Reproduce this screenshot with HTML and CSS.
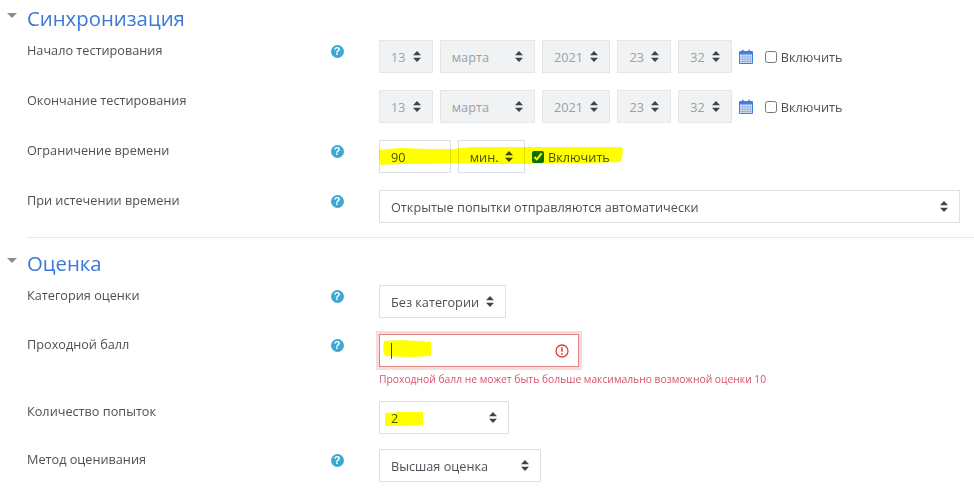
FILE: index.html
```html
<!DOCTYPE html>
<html lang="ru">
<head>
<meta charset="utf-8">
<title>Настройки теста</title>
<link rel="stylesheet" href="styles.css">
</head>
<body>
<main class="page">
  <section class="section first">
    <h2 class="head"><span class="caret"></span>Синхронизация</h2>
    <div class="rows timing">
      <div class="row">
        <label class="label">Начало тестирования</label>
        <span class="help">?</span>
        <div class="controls">
          <div class="sel off w-day"><span>13</span><svg class="arr" viewBox="0 0 8 11"><path d="M4 0 8 4.2H0zM4 11 0 6.8H8z"/></svg></div>
          <div class="sel off w-mon"><span>марта</span><svg class="arr" viewBox="0 0 8 11"><path d="M4 0 8 4.2H0zM4 11 0 6.8H8z"/></svg></div>
          <div class="sel off w-yr"><span>2021</span><svg class="arr" viewBox="0 0 8 11"><path d="M4 0 8 4.2H0zM4 11 0 6.8H8z"/></svg></div>
          <div class="sel off w-day"><span>23</span><svg class="arr" viewBox="0 0 8 11"><path d="M4 0 8 4.2H0zM4 11 0 6.8H8z"/></svg></div>
          <div class="sel off w-day"><span>32</span><svg class="arr" viewBox="0 0 8 11"><path d="M4 0 8 4.2H0zM4 11 0 6.8H8z"/></svg></div>
          <svg class="cal" viewBox="0 0 14 15"><path fill="#3f7fe0" d="M1 2h2V.8h1.6V2h4.8V.8H11V2h2a1 1 0 0 1 1 1v11a1 1 0 0 1-1 1H1a1 1 0 0 1-1-1V3a1 1 0 0 1 1-1z"/><path fill="#dbe6fa" d="M1 5.5h12V14H1z"/><path stroke="#7fa6ea" stroke-width=".7" d="M1 8h12M1 10.3h12M1 12.5h12M3.7 5.5V14M6.2 5.5V14M8.8 5.5V14M11.3 5.5V14"/></svg>
          <label class="check cal-check"><input type="checkbox"><span>Включить</span></label>
        </div>
      </div>
      <div class="row">
        <label class="label">Окончание тестирования</label>
        <span></span>
        <div class="controls">
          <div class="sel off w-day"><span>13</span><svg class="arr" viewBox="0 0 8 11"><path d="M4 0 8 4.2H0zM4 11 0 6.8H8z"/></svg></div>
          <div class="sel off w-mon"><span>марта</span><svg class="arr" viewBox="0 0 8 11"><path d="M4 0 8 4.2H0zM4 11 0 6.8H8z"/></svg></div>
          <div class="sel off w-yr"><span>2021</span><svg class="arr" viewBox="0 0 8 11"><path d="M4 0 8 4.2H0zM4 11 0 6.8H8z"/></svg></div>
          <div class="sel off w-day"><span>23</span><svg class="arr" viewBox="0 0 8 11"><path d="M4 0 8 4.2H0zM4 11 0 6.8H8z"/></svg></div>
          <div class="sel off w-day"><span>32</span><svg class="arr" viewBox="0 0 8 11"><path d="M4 0 8 4.2H0zM4 11 0 6.8H8z"/></svg></div>
          <svg class="cal" viewBox="0 0 14 15"><path fill="#3f7fe0" d="M1 2h2V.8h1.6V2h4.8V.8H11V2h2a1 1 0 0 1 1 1v11a1 1 0 0 1-1 1H1a1 1 0 0 1-1-1V3a1 1 0 0 1 1-1z"/><path fill="#dbe6fa" d="M1 5.5h12V14H1z"/><path stroke="#7fa6ea" stroke-width=".7" d="M1 8h12M1 10.3h12M1 12.5h12M3.7 5.5V14M6.2 5.5V14M8.8 5.5V14M11.3 5.5V14"/></svg>
          <label class="check cal-check"><input type="checkbox"><span>Включить</span></label>
        </div>
      </div>
      <div class="row">
        <label class="label">Ограничение времени</label>
        <span class="help">?</span>
        <div class="controls">
          <div class="sel w-num"><span>90</span></div>
          <div class="sel w-unit"><span>мин.</span><svg class="arr" viewBox="0 0 8 11"><path d="M4 0 8 4.2H0zM4 11 0 6.8H8z"/></svg></div>
          <label class="check"><input type="checkbox" checked><span>Включить</span></label>
        </div>
      </div>
      <div class="row">
        <label class="label">При истечении времени</label>
        <span class="help">?</span>
        <div class="controls">
          <div class="sel w-full"><span>Открытые попытки отправляются автоматически</span><svg class="arr" viewBox="0 0 8 11"><path d="M4 0 8 4.2H0zM4 11 0 6.8H8z"/></svg></div>
        </div>
      </div>
    </div>
  </section>

  <section class="section second">
    <h2 class="head"><span class="caret"></span>Оценка</h2>
    <div class="row row-cat">
      <label class="label">Категория оценки</label>
      <span class="help">?</span>
      <div class="controls">
        <div class="sel w-cat"><span>Без категории</span><svg class="arr" viewBox="0 0 8 11"><path d="M4 0 8 4.2H0zM4 11 0 6.8H8z"/></svg></div>
      </div>
    </div>
    <div class="row row-err">
      <label class="label">Проходной балл</label>
      <span class="help">?</span>
      <div class="controls stack">
        <div class="sel err"><span class="cursor"></span><svg class="err-icon" viewBox="0 0 14 14"><circle cx="7" cy="7" r="6" fill="none" stroke="#d9413f" stroke-width="1.3"/><path stroke="#d9413f" stroke-width="1.5" d="M7 3.2v4.6M7 9.2v1.5"/></svg></div>
        <div class="feedback">Проходной балл не может быть больше максимально возможной оценки 10</div>
      </div>
    </div>
    <div class="row row-att">
      <label class="label">Количество попыток</label>
      <span></span>
      <div class="controls">
        <div class="sel w-att"><span>2</span><svg class="arr" viewBox="0 0 8 11"><path d="M4 0 8 4.2H0zM4 11 0 6.8H8z"/></svg></div>
      </div>
    </div>
    <div class="row row-met">
      <label class="label">Метод оценивания</label>
      <span class="help">?</span>
      <div class="controls">
        <div class="sel w-met"><span>Высшая оценка</span><svg class="arr" viewBox="0 0 8 11"><path d="M4 0 8 4.2H0zM4 11 0 6.8H8z"/></svg></div>
      </div>
    </div>
  </section>

  <svg class="marker" viewBox="0 0 974 496" aria-hidden="true">
    <path fill="#ffff00" d="M379 150 400 148 430 149 452 149 470 147 500 147 530 147 570 147 622 147 623 152 621 162 590 163 560 163 530 164 490 164 450 163 430 164 400 164 380 165z"/>
    <path fill="#ffff00" d="M384 341 400 340 420 341 431 342 431 356 410 357 385 356 383 350z"/>
    <path fill="#ffff00" d="M385 413 400 412 423 412 423 425 400 426 385 426z"/>
  </svg>
</main>
</body>
</html>
```

FILE: styles.css
```css
* { box-sizing: border-box; }

html, body { margin: 0; background: #fff; }

body {
  font-family: "Open Sans", "Noto Sans", sans-serif;
  font-size: 12.7px;
  color: #4c5158;
  overflow: hidden;
}

.page {
  position: relative;
  width: 974px;
  height: 496px;
  filter: blur(0.4px);
}

.section { display: flex; flex-direction: column; }
.first { height: 238px; border-bottom: 1px solid #e6e8ea; margin-left: 27px; }
.first .row, .first .head { margin-left: -27px; }
.second { padding-top: 12px; }

.head {
  display: flex;
  align-items: center;
  height: 26px;
  margin: 5px 0 9px;
  padding-left: 27px;
  position: relative;
  font-size: 20.35px;
  font-weight: 400;
  line-height: 26px;
  color: #3b78d8;
}
.second .head { margin: 0 0 9px; }

.caret {
  position: absolute;
  left: 7px;
  top: 8px;
  border-left: 5.5px solid transparent;
  border-right: 5.5px solid transparent;
  border-top: 5.5px solid #8a8d90;
}

.rows { display: flex; flex-direction: column; gap: 17.1px; }

.row {
  display: grid;
  grid-template-columns: 303.5px 48.5px 1fr;
  padding-left: 27px;
  align-items: start;
}

.label { line-height: 21px; }

.help {
  width: 13px;
  height: 13px;
  margin-top: 5px;
  border-radius: 50%;
  background: #3ea8d2;
  color: #fff;
  font-family: "Liberation Sans", sans-serif;
  font-size: 11px;
  font-weight: 700;
  line-height: 13px;
  text-align: center;
}

.controls { display: flex; align-items: flex-start; gap: 7.3px; }
.stack { flex-direction: column; gap: 0; }

.sel {
  display: flex;
  align-items: center;
  justify-content: space-between;
  height: 33px;
  padding: 0 11px 0 11px;
  border: 1px solid #dde1e6;
  background: #fff;
  color: #4c5158;
  flex: none;
}

.off { background: #f0f2f4; color: #9a9fa6; border-color: #e4e7ea; }

.arr { width: 8px; height: 11px; fill: #3f444a; flex: none; }

.w-day { width: 53.5px; }
.w-mon { width: 95px; }
.w-yr { width: 68px; }
.w-num { width: 71.5px; }
.w-unit { width: 67px; }
.w-full { width: 581px; }
.w-cat { width: 127px; }
.w-att { width: 130px; }
.w-met { width: 162px; }

.cal { width: 14px; height: 15px; margin: 9px 0 0 0; flex: none; }

.check {
  display: flex;
  align-items: center;
  height: 33px;
  font-size: 12.7px;
  color: #4c5158;
  margin-left: 0;
  gap: 4px;
}
.cal-check { margin-left: 4.5px; }
.check input { width: 12px; height: 12px; margin: 0; accent-color: #0a6fc2; }

.row-cat { margin-top: 0; }
.row-err { margin-top: 16px; }
.row-att { margin-top: 0; }
.row-met { margin-top: 15px; }

.err {
  width: 200px;
  height: 33px;
  padding: 0 9px 0 11px;
  border: 1px solid #e08583;
  box-shadow: 0 0 0 3px #f8dcdb;
}

.cursor { width: 1px; height: 16px; background: #4c5158; }

.err-icon { width: 14px; height: 14px; flex: none; }

.feedback {
  height: 34px;
  padding-top: 4px;
  font-size: 10.3px;
  line-height: 16px;
  color: #d9536a;
  white-space: nowrap;
}

.marker {
  position: absolute;
  left: 0;
  top: 0;
  width: 974px;
  height: 496px;
  mix-blend-mode: multiply;
  pointer-events: none;
}
```
